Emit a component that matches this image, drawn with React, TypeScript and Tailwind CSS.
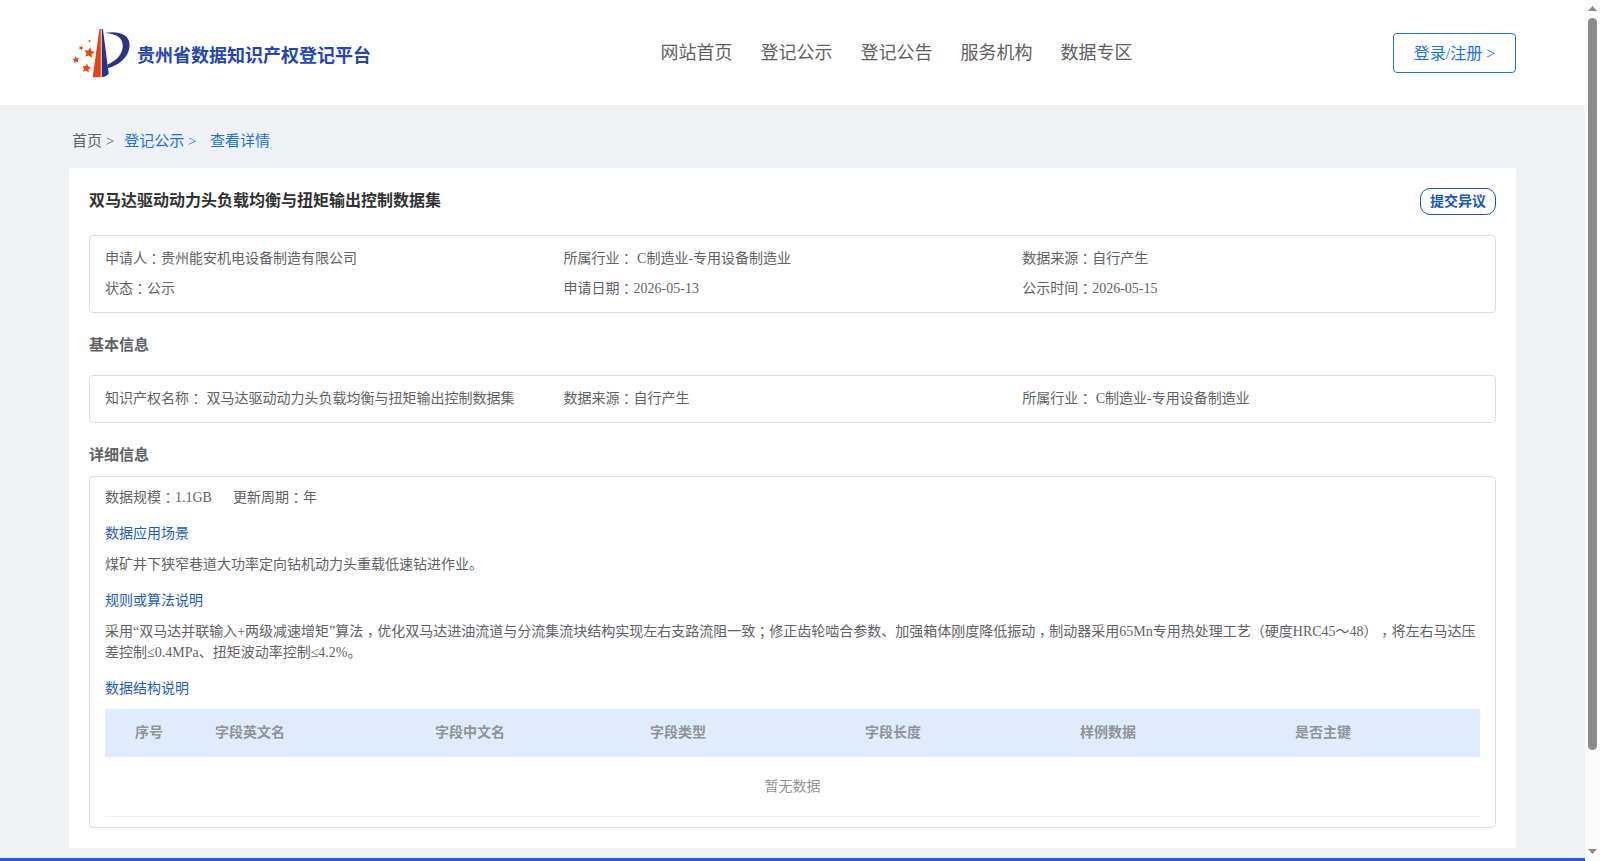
import React from "react";

const navItems = ["网站首页", "登记公示", "登记公告", "服务机构", "数据专区"];

const summary = [
  ["申请人：", "贵州能安机电设备制造有限公司"],
  ["所属行业：", " C制造业-专用设备制造业"],
  ["数据来源：", "自行产生"],
  ["状态：", "公示"],
  ["申请日期：", "2026-05-13"],
  ["公示时间：", "2026-05-15"],
];

const basics = [
  ["知识产权名称：", " 双马达驱动动力头负载均衡与扭矩输出控制数据集"],
  ["数据来源：", "自行产生"],
  ["所属行业：", " C制造业-专用设备制造业"],
];

const columns = ["字段英文名", "字段中文名", "字段类型", "字段长度", "样例数据", "是否主键"];

const stars = [
  { x: 17.3, y: 24.8, r: 5.6, turn: 10 },
  { x: 14.4, y: 40.2, r: 4.8, turn: 8 },
  { x: 4, y: 31.8, r: 3.6, turn: -8 },
  { x: 9, y: 20, r: 2.4, turn: 20 },
  { x: 17.5, y: 13, r: 1.5, turn: 0 },
];

function starPoints(x: number, y: number, r: number, turn: number) {
  return Array.from({ length: 10 }, (_, i) => {
    const a = ((turn - 90 + i * 36) * Math.PI) / 180;
    const d = i % 2 ? r * 0.48 : r;
    return `${(x + d * Math.cos(a)).toFixed(2)},${(y + d * Math.sin(a)).toFixed(2)}`;
  }).join(" ");
}

function Logo() {
  return (
    <svg width="60" height="52" viewBox="0 0 60 52" className="shrink-0">
      <path d="M27.4 1H28.8V49.2H20.7Z" fill="#e8430f" />
      <path d="M29.7 1H30.9L33.4 20L35.4 36.5L36.8 45.5Q35 48.5 29.7 49.2Z" fill="#2a328a" />
      <path d="M32.6 5C44 2.6 58 5 57.6 17.5C57 30 46 37.5 35.5 40.2V36.4C43 33.5 50.6 27 50.8 18C50.9 9 43 5.5 32.6 5Z" fill="#2a328a" />
      {stars.map((s) => (
        <polygon key={s.x} points={starPoints(s.x, s.y, s.r, s.turn)} fill="#e8430f" />
      ))}
    </svg>
  );
}

/* Sets colons and commas in the middle of their full-width cell. */
function Zh({ children }: { children: string }) {
  return (
    <>
      {children.split(/([：，；])/).map((part, i) =>
        i % 2 ? (
          <span key={i} className={part === "，" ? "relative top-[4px] font-['Noto_Sans_CJK_TC',sans-serif] leading-none" : "relative top-px font-['Noto_Sans_CJK_TC',sans-serif] leading-none"}>{part}</span>
        ) : part
      )}
    </>
  );
}

function InfoGrid({ items }: { items: string[][] }) {
  return (
    <div className="grid grid-cols-[458.6px_458.6px_1fr] rounded border border-[#dcdfe0] px-[15px] py-2 text-sm/[30px]">
      {items.map(([label, value]) => (
        <div key={label} className="h-[30px] whitespace-pre"><Zh>{label}</Zh>{value}</div>
      ))}
    </div>
  );
}

export default function App() {
  return (
    <div className="flex h-[861px] overflow-hidden bg-[#eef2f5] font-['Liberation_Serif','Noto_Sans_CJK_SC',serif] text-[#606266] [text-spacing-trim:space-all]">
      <div className="flex min-w-0 flex-1 flex-col">
        <header className="flex h-[105px] shrink-0 items-start bg-white pr-[69px] pl-[72px]">
          <div className="flex w-[588.5px] items-center pt-7">
            <Logo />
            <h1 className="pt-[3px] pl-[5px] text-[18px]/[28px] font-bold text-[#2446b4]">贵州省数据知识产权登记平台</h1>
          </div>
          <nav className="flex gap-7 pt-[39px] text-[18px]/[28px] text-[#606060]">
            {navItems.map((n) => <a key={n}>{n}</a>)}
          </nav>
          <button className="mt-[33px] ml-auto h-10 w-[123px] rounded border border-[#1a6ff0] pt-[2px] text-base/[36px] text-[#1a6ff0]">登录/注册 &gt;</button>
        </header>

        <div className="flex h-[63px] shrink-0 items-center pt-2 pl-[72px] text-[15px]/[24px]">
          <span>首页 &gt;</span>
          <span className="ml-[10px] text-[#1a6ff0]">登记公示 &gt;</span>
          <span className="ml-[13.5px] text-[#1a6ff0]">查看详情</span>
        </div>

        <main className="mr-[69px] ml-[69px] h-[680px] shrink-0 bg-white px-5">
          <div className="flex h-[67px] items-start justify-between">
            <h2 className="pt-[21px] text-base/[24px] font-bold text-[#303133]">双马达驱动动力头负载均衡与扭矩输出控制数据集</h2>
            <button className="mt-5 h-[27px] w-[76px] rounded-[10px] border border-[#1b56c0] text-sm/[25px] font-bold text-[#1b56c0]">提交异议</button>
          </div>
          <InfoGrid items={summary} />
          <h3 className="h-[62px] pt-[20px] text-[15px]/[24px] font-bold">基本信息</h3>
          <InfoGrid items={basics} />
          <h3 className="h-[53px] pt-[20px] text-[15px]/[24px] font-bold">详细信息</h3>

          <section className="h-[352px] rounded border border-[#dcdfe0] px-[15px] pt-[10px] text-sm/[21px]">
            <div className="flex h-[21px] gap-[21px]"><span><Zh>数据规模：1.1GB</Zh></span><span><Zh>更新周期：年</Zh></span></div>
            <h4 className="mt-[15px] text-[#1d5ccf]">数据应用场景</h4>
            <p className="mt-[10px]">煤矿井下狭窄巷道大功率定向钻机动力头重载低速钻进作业。</p>
            <h4 className="mt-[15px] text-[#1d5ccf]">规则或算法说明</h4>
            <p className="mt-[10px] h-[42px]"><Zh>采用“双马达并联输入+两级减速增矩”算法，优化双马达进油流道与分流集流块结构实现左右支路流阻一致；修正齿轮啮合参数、加强箱体刚度降低振动，制动器采用65Mn专用热处理工艺（硬度HRC45～48），将左右马达压差控制≤0.4MPa、扭矩波动率控制≤4.2%。</Zh></p>
            <h4 className="mt-[15px] text-[#1d5ccf]">数据结构说明</h4>
            <div className="mt-[10px] flex h-12 items-center border-b border-[#ebeef5] bg-[#e0ecfe] font-bold text-[#909399]">
              <div className="w-[110px] shrink-0 pl-[30px]">序号</div>
              {columns.map((c, i) => (
                <div key={c} className={i === 0 ? "w-[220px] shrink-0" : i === 5 ? "flex-1" : "w-[215px] shrink-0"}>{c}</div>
              ))}
            </div>
            <div className="flex h-[60px] items-center justify-center border-b border-[#ebeef5] text-[#909399]">暂无数据</div>
          </section>
        </main>
        <div className="mt-[10px] h-[3px] shrink-0 bg-[#1d61d0]" />
      </div>

      <div className="flex w-[15px] shrink-0 flex-col items-center bg-[#fcfcfc] pt-[6px]">
        <svg width="9" height="5" viewBox="0 0 9 5"><path d="M0 5L4.5 0L9 5Z" fill="#8b8b8b" /></svg>
        <div className="mt-[7px] h-[732px] w-[9px] rounded-full bg-[#8b8b8b]" />
        <svg className="mt-[99px]" width="9" height="5" viewBox="0 0 9 5"><path d="M0 0L4.5 5L9 0Z" fill="#8b8b8b" /></svg>
      </div>
    </div>
  );
}
